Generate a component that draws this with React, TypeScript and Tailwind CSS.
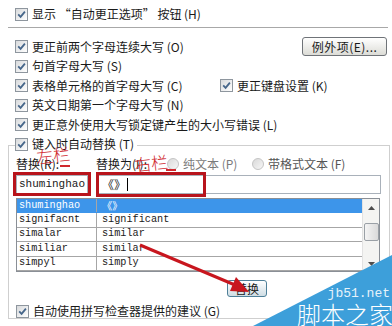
import React from 'react';

const cjk = { fontFamily: '"Noto Sans CJK SC", "Liberation Sans", sans-serif' };
const mono = { fontFamily: '"Liberation Mono", "Noto Sans CJK SC", monospace' };

const Check: React.FC = () => (
  <span className="w-[13px] h-[13px] shrink-0 border border-[#8e969e] bg-linear-to-br from-[#d8dadc] to-white flex items-center justify-center">
    <svg width="9" height="9" viewBox="0 0 9 9">
      <path d="M1.2 4.4 L3.6 6.9 L7.9 1.6" stroke="#46668a" strokeWidth="1.8" fill="none" />
    </svg>
  </span>
);

const Radio: React.FC = () => (
  <span className="w-[12px] h-[12px] shrink-0 rounded-full border border-[#c4c4c4] bg-linear-to-br from-[#d9d9d9] to-[#f7f7f7]" />
);

const CheckRow: React.FC<{ label: string; className?: string }> = ({ label, className }) => (
  <div className={`flex items-center gap-[4px] ${className ?? ''}`}>
    <Check />
    <span className="whitespace-nowrap">{label}</span>
  </div>
);

const rows = [
  ['shuminghao', '《》'],
  ['signifacnt', 'significant'],
  ['simalar', 'similar'],
  ['similiar', 'similar'],
  ['simpyl', 'simply'],
];

const App: React.FC = () => {
  return (
    <div
      className="relative w-[392px] h-[326px] overflow-hidden bg-white text-[12px] leading-none text-[#1a1a1a]"
      style={cjk}
    >
      <div className="pt-[4px]">
        <CheckRow label="显示 “自动更正选项” 按钮 (H)" className="h-[20px] pl-[15px]" />
        <div className="mt-[3px] ml-[8px] mr-[4px] h-px bg-[#a8a8a8]" />

        <div className="mt-[9px] h-[19.5px] pl-[15px] pr-[5px] flex items-center justify-between">
          <CheckRow label="更正前两个字母连续大写 (O)" />
          <button className="w-[85px] h-[19px] rounded-[3px] border border-[#6f7378] bg-linear-to-b from-white to-[#dcdcd6] text-[12px] flex items-center justify-center tracking-[0.5px]">
            例外项(E)...
          </button>
        </div>
        <CheckRow label="句首字母大写 (S)" className="h-[19.5px] pl-[15px]" />
        <div className="h-[19.5px] pl-[15px] flex items-center">
          <div className="w-[205px]">
            <CheckRow label="表格单元格的首字母大写 (C)" />
          </div>
          <CheckRow label="更正键盘设置 (K)" />
        </div>
        <CheckRow label="英文日期第一个字母大写 (N)" className="h-[19.5px] pl-[15px]" />
        <CheckRow label="更正意外使用大写锁定键产生的大小写错误 (L)" className="h-[19.5px] pl-[15px]" />

        {/* group box */}
        <div className="ml-[8px] w-[382px]">
          <div className="flex h-[19.5px]">
            <div className="w-[7px] mt-[10px] border-l border-t border-[#cfcfcf]" />
            <CheckRow label="键入时自动替换 (T)" className="pr-[3px]" />
            <div className="flex-1 mt-[10px] border-t border-r border-[#cfcfcf]" />
          </div>
          <div className="border-l border-r border-b border-[#cfcfcf] pl-[7px] h-[165px]">
            <div className="h-[20px] flex items-center">
              <span className="w-[80px]">替换(R):</span>
              <span className="w-[71px]">替换为(I):</span>
              <div className="w-[85px] flex items-center gap-[4px] text-[#7a7a7a]">
                <Radio />
                <span>纯文本 (P)</span>
              </div>
              <div className="flex items-center gap-[4px] text-[#555]">
                <Radio />
                <span>带格式文本 (F)</span>
              </div>
            </div>
            <div className="mt-[1px] flex gap-[8px]">
              <div className="w-[72px] h-[19px] border border-[#a9b1ba] flex items-center pl-[2px] text-[11px]" style={mono}>
                shuminghao
              </div>
              <div className="w-[285px] h-[19px] border border-[#a9b1ba] flex items-center pl-[5px] text-[12px]">
                《》<span className="ml-[1px] w-px h-[13px] bg-black" />
              </div>
            </div>
            <div className="mt-[4px] w-[364px] h-[74px] border border-[#8a8f96] flex">
              <div className="flex-1 flex flex-col">
                {rows.map(([a, b], i) => (
                  <div
                    key={a}
                    className={`h-[14.5px] flex items-center border-b ${
                      i === 0 ? 'bg-[#3d95ea] text-white border-[#3d95ea]' : 'border-[#a6a6a6]'
                    }`}
                  >
                    <span className="w-[80px] h-full flex items-center pl-[2px] border-r border-[#a6a6a6] text-[10.2px]" style={mono}>
                      {a}
                    </span>
                    <span className="pl-[5px] text-[10.2px]" style={i === 0 ? cjk : mono}>
                      {b}
                    </span>
                  </div>
                ))}
              </div>
              <div className="w-[17px] bg-[#f4f4f2] border-l border-[#e2e2e2] flex flex-col items-center">
                <div className="h-[18px] flex items-center justify-center">
                  <svg width="7" height="4" viewBox="0 0 7 4">
                    <path d="M0 4 L3.5 0 L7 4 Z" fill="#4d4d4d" />
                  </svg>
                </div>
                <div className="mt-[6px] w-[15px] h-[18px] rounded-[2px] border border-[#9aa0a6] bg-linear-to-r from-[#f4f4f4] to-[#dadada]" />
                <div className="flex-1" />
                <div className="h-[14px] flex items-center justify-center">
                  <svg width="7" height="4" viewBox="0 0 7 4">
                    <path d="M0 0 L3.5 4 L7 0 Z" fill="#4d4d4d" />
                  </svg>
                </div>
              </div>
            </div>
            <div className="mt-[8px] flex">
              <button className="ml-[211px] w-[40px] h-[17px] rounded-[3px] border border-[#4e7f98] bg-linear-to-b from-white to-[#cfdde4] flex items-center justify-center text-[12px]">
                替换
              </button>
            </div>
            <CheckRow label="自动使用拼写检查器提供的建议 (G)" className="mt-[4px] h-[18px] pt-[2px]" />
          </div>
        </div>
      </div>

      {/* red annotations */}
      <div className="absolute left-[13px] top-[172px] w-[78px] h-[24px] border-[3px] border-[#b8141c]" />
      <div className="absolute left-[96px] top-[172px] w-[110px] h-[25px] border-[3px] border-[#b8141c]" />
      <span className="absolute left-[36px] top-[146px] text-[17px] text-[#d0282e] font-light -rotate-6">左栏</span>
      <span className="absolute left-[60px] top-[165px] w-[10px] h-[2px] bg-[#d0282e]" />
      <span className="absolute left-[134px] top-[154px] text-[17px] text-[#d0282e] font-light -rotate-6">右栏</span>
      <span className="absolute left-[166px] top-[169px] w-[10px] h-[2px] bg-[#d0282e]" />

      <svg className="absolute left-0 top-0" width="392" height="326" viewBox="0 0 392 326">
        <line x1="140" y1="245" x2="235" y2="285" stroke="#c8161e" strokeWidth="3" />
        <polygon points="249,292 230,291 236,277" fill="#c8161e" />
        <polygon points="392,255 392,326 253,326" fill="#3d9fda" />
      </svg>
      <span className="absolute right-[2px] top-[287px] text-[13px] leading-none text-[#e6f3fb]" style={mono}>
        jb51.net
      </span>
      <span className="absolute right-[-1px] top-[302px] text-[24px] leading-none text-white font-light" style={cjk}>
        脚本之家
      </span>
    </div>
  );
};

export default App;
